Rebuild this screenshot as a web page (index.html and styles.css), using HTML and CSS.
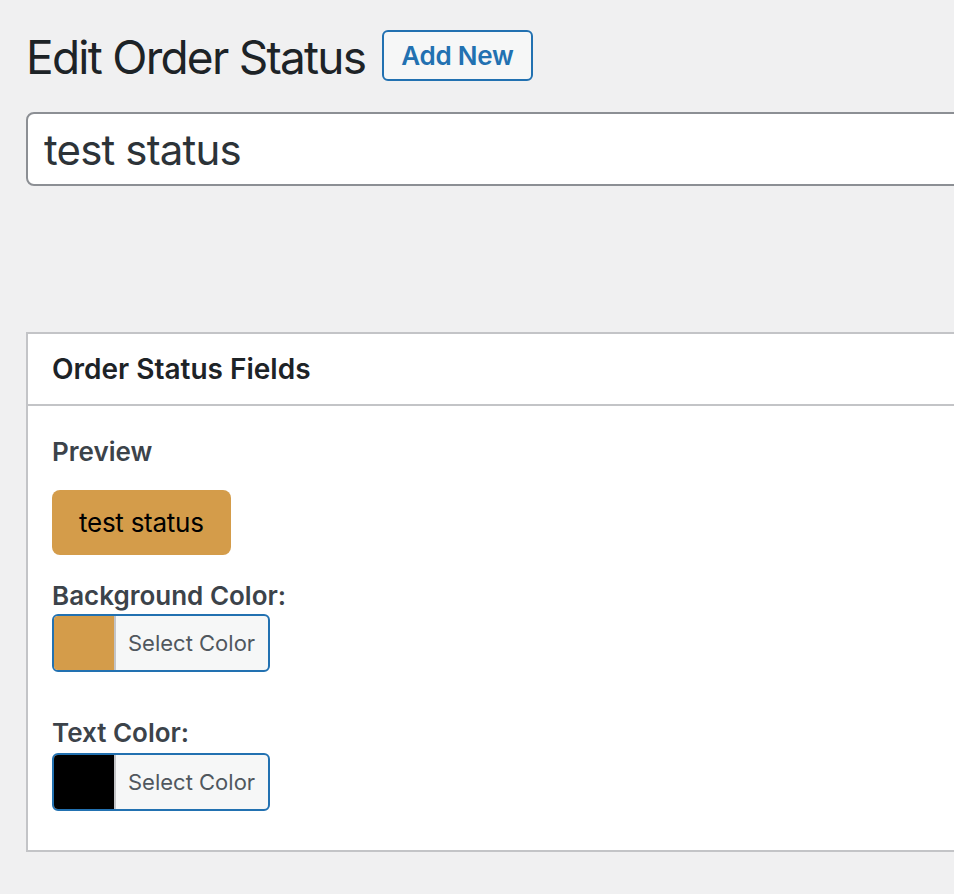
FILE: index.html
```html
<!DOCTYPE html>
<html lang="en">
<head>
<meta charset="utf-8">
<title>Edit Order Status</title>
<link rel="stylesheet" href="styles.css">
</head>
<body>
<div class="wrap">
  <div class="page-header">
    <h1 class="page-title">Edit Order Status</h1>
    <a class="page-title-action" href="#">Add New</a>
  </div>
  <input class="title-input" type="text" value="test status">
  <div class="postbox">
    <div class="postbox-header">
      <h2 class="postbox-title">Order Status Fields</h2>
    </div>
    <div class="inside">
      <div class="field-label">Preview</div>
      <div class="preview-row"><span class="status-badge">test status</span></div>
      <div class="field-label field-label-spaced">Background Color:</div>
      <button class="color-result" type="button">
        <span class="color-swatch swatch-gold"></span>
        <span class="color-result-text">Select Color</span>
      </button>
      <div class="field-label field-label-wide">Text Color:</div>
      <button class="color-result" type="button">
        <span class="color-swatch swatch-black"></span>
        <span class="color-result-text">Select Color</span>
      </button>
    </div>
  </div>
</div>
</body>
</html>
```
FILE: styles.css
```css
html {
  overflow: hidden;
}
body {
  margin: 0;
  background: #f0f0f1;
  font-family: Inter, "Noto Sans", "Liberation Sans", sans-serif;
  color: #3c434a;
}
.wrap {
  width: 1200px;
  padding: 27px 0 0 26px;
}
.page-header {
  display: flex;
  align-items: flex-start;
}
.page-title {
  margin: 0;
  font-size: 46px;
  line-height: 60px;
  font-weight: 400;
  letter-spacing: -0.038em;
  color: #1d2327;
}
.page-title-action {
  margin: 3px 0 0 17px;
  display: inline-block;
  height: 47px;
  line-height: 47px;
  padding: 0 17px;
  border: 2px solid #2271b1;
  border-radius: 6px;
  background: #f6f7f7;
  color: #2271b1;
  font-size: 26px;
  font-weight: 600;
  letter-spacing: -0.01em;
  text-decoration: none;
}
.title-input {
  display: block;
  box-sizing: border-box;
  margin: 25px 0 0;
  width: 1100px;
  height: 74px;
  padding: 0 16px;
  border: 2px solid #8c8f94;
  border-radius: 8px;
  background: #fff;
  font-family: inherit;
  font-size: 42px;
  line-height: 70px;
  letter-spacing: -0.02em;
  color: #2c3338;
  outline: none;
}
.postbox {
  margin-top: 146px;
  width: 1100px;
  background: #fff;
  border: 2px solid #c3c4c7;
}
.postbox-header {
  border-bottom: 2px solid #c3c4c7;
  padding: 0 24px;
}
.postbox-title {
  margin: 0;
  font-size: 28px;
  line-height: 70px;
  font-weight: 600;
  color: #1d2327;
}
.inside {
  padding: 28px 24px 39px;
}
.field-label {
  font-size: 26px;
  line-height: 36px;
  font-weight: 600;
  color: #3c434a;
}
.field-label-spaced {
  margin-top: 23px;
  margin-bottom: 0;
}
.field-label-wide {
  margin-top: 43px;
  margin-bottom: 2px;
}
.preview-row {
  margin-top: 20px;
  display: flex;
}
.status-badge {
  display: inline-block;
  height: 65px;
  line-height: 65px;
  padding: 0 27px;
  border-radius: 8px;
  background: #d49c4a;
  color: #000;
  font-size: 26px;
  letter-spacing: -0.01em;
}
.color-result {
  display: flex;
  box-sizing: border-box;
  height: 58px;
  padding: 0;
  margin: 0;
  border: 2px solid #2271b1;
  border-radius: 6px;
  overflow: hidden;
  background: #f6f7f7;
  font-family: inherit;
  cursor: pointer;
}
.color-swatch {
  width: 60px;
  height: 100%;
  border-right: 2px solid #c3c4c7;
}
.swatch-gold {
  background: #d49c4a;
}
.swatch-black {
  background: #000;
}
.color-result-text {
  padding: 0 13px 0 12px;
  font-size: 22px;
  line-height: 54px;
  color: #50575e;
}
```
